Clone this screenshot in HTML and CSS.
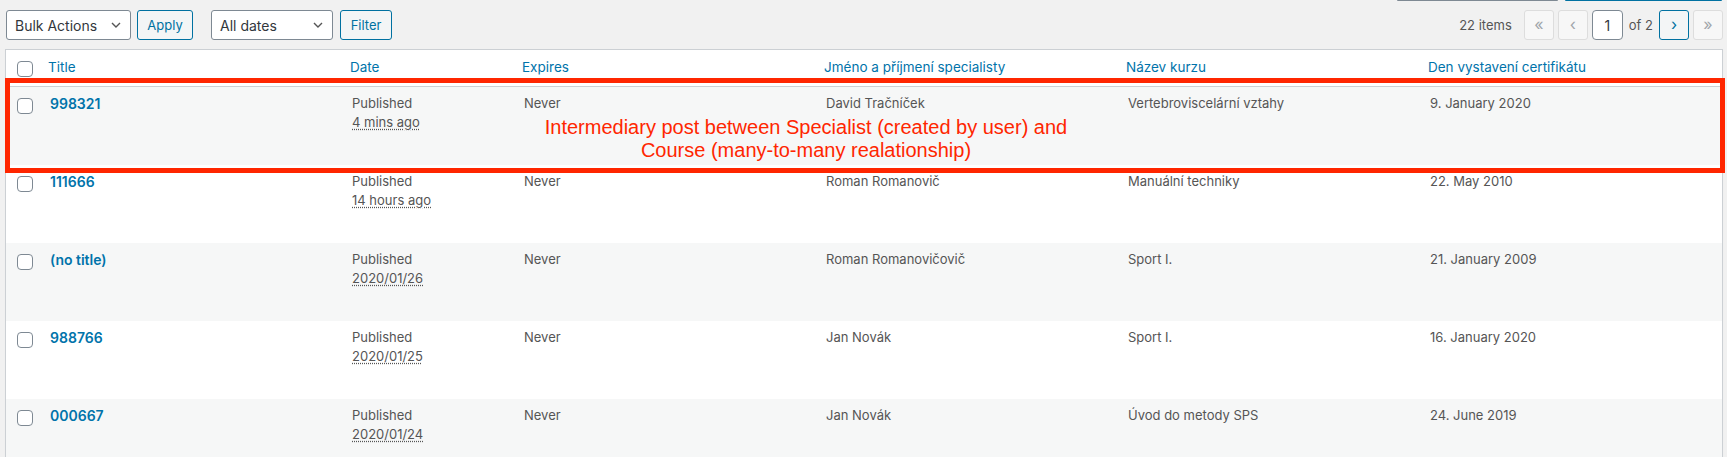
FILE: index.html
```html
<!DOCTYPE html>
<html lang="cs">
<head>
	<meta charset="UTF-8">
	<title>Certifikáty</title>
	<link rel="stylesheet" href="styles.css">
</head>
<body>
<div class="wrap">
	<div class="search-box"><span class="search-input"></span><span class="search-submit"></span></div>

	<div class="tablenav">
		<div class="actions">
			<div class="select bulk">Bulk Actions
				<svg width="10" height="6" viewBox="0 0 10 6"><polyline points="1,1 5,5 9,1" fill="none" stroke="#555" stroke-width="1.4"/></svg>
			</div>
			<span class="button apply">Apply</span>
		</div>
		<div class="actions">
			<div class="select dates">All dates
				<svg width="10" height="6" viewBox="0 0 10 6"><polyline points="1,1 5,5 9,1" fill="none" stroke="#555" stroke-width="1.4"/></svg>
			</div>
			<span class="button filter">Filter</span>
		</div>
		<div class="pages">
			<span class="displaying-num">22 items</span>
			<span class="navspan">«</span>
			<span class="navspan">‹</span>
			<span class="current-page">1</span>
			<span class="paging-text">of 2</span>
			<span class="button navbtn">›</span>
			<span class="navspan">»</span>
		</div>
	</div>

	<table class="list">
		<colgroup>
			<col class="col-cb">
			<col>
			<col class="col-date">
			<col>
			<col>
			<col>
			<col>
		</colgroup>
		<thead>
			<tr>
				<td class="check-column"><span class="cb"></span></td>
				<th><a>Title</a></th>
				<th><a>Date</a></th>
				<th><a>Expires</a></th>
				<th><a>Jméno a příjmení specialisty</a></th>
				<th><a>Název kurzu</a></th>
				<th><a>Den vystavení certifikátu</a></th>
			</tr>
		</thead>
		<tbody>
			<tr class="alt">
				<th class="check-column"><span class="cb"></span></th>
				<td><strong class="row-title">998321</strong></td>
				<td>Published<br><abbr>4 mins ago</abbr></td>
				<td>Never</td>
				<td>David Tračníček</td>
				<td>Vertebroviscelární vztahy</td>
				<td>9. January 2020</td>
			</tr>
			<tr>
				<th class="check-column"><span class="cb"></span></th>
				<td><strong class="row-title">111666</strong></td>
				<td>Published<br><abbr>14 hours ago</abbr></td>
				<td>Never</td>
				<td>Roman Romanovič</td>
				<td>Manuální techniky</td>
				<td>22. May 2010</td>
			</tr>
			<tr class="alt">
				<th class="check-column"><span class="cb"></span></th>
				<td><strong class="row-title">(no title)</strong></td>
				<td>Published<br><abbr>2020/01/26</abbr></td>
				<td>Never</td>
				<td>Roman Romanovičovič</td>
				<td>Sport I.</td>
				<td>21. January 2009</td>
			</tr>
			<tr>
				<th class="check-column"><span class="cb"></span></th>
				<td><strong class="row-title">988766</strong></td>
				<td>Published<br><abbr>2020/01/25</abbr></td>
				<td>Never</td>
				<td>Jan Novák</td>
				<td>Sport I.</td>
				<td>16. January 2020</td>
			</tr>
			<tr class="alt">
				<th class="check-column"><span class="cb"></span></th>
				<td><strong class="row-title">000667</strong></td>
				<td>Published<br><abbr>2020/01/24</abbr></td>
				<td>Never</td>
				<td>Jan Novák</td>
				<td>Úvod do metody SPS</td>
				<td>24. June 2019</td>
			</tr>
		</tbody>
	</table>
</div>

<!-- annotation drawn over the screenshot -->
<div class="note-box"></div>
<div class="note-text">Intermediary post between Specialist (created by user) and<br>Course (many-to-many realationship)</div>
</body>
</html>
```

FILE: styles.css
```css
:root {
	--color-page: #f1f1f1;
	--color-text: #555;
	--color-text-dark: #32373c;
	--color-link: #0073aa;
	--color-button: #0071a1;
	--color-border: #ccd0d4;
	--color-input-border: #7e8993;
	--color-stripe: #f6f7f7;
	--color-note: #ff2600;
}

html {
	font-family: Inter, "Noto Sans", sans-serif;
	font-size: 13px;
	color: var(--color-text);
	background: var(--color-page);
}

body {
	margin: 0;
}

.wrap {
	padding: 0 4px 0 5px;
}

/* bottom edge of the search box, cut off by the screenshot */

.search-box {
	display: flex;
	justify-content: flex-end;
	gap: 7px;
	height: 1px;
	padding-right: 1px;
}

.search-input {
	width: 161px;
	border-bottom: 1px solid var(--color-input-border);
	border-radius: 0 0 3px 3px;
}

.search-submit {
	width: 157px;
	border-bottom: 1px solid var(--color-button);
	border-radius: 0 0 3px 3px;
}

/* toolbar */

.tablenav {
	display: flex;
	align-items: center;
	height: 30px;
	margin: 9px 0 9px;
}

.actions {
	display: flex;
	gap: 6px;
	margin-right: 18px;
}

.actions:first-child {
	margin-left: 1px;
}

.select {
	box-sizing: border-box;
	display: flex;
	align-items: center;
	justify-content: space-between;
	height: 30px;
	padding: 0 9px 0 8px;
	border: 1px solid var(--color-input-border);
	border-radius: 3px;
	background: #fff;
	color: var(--color-text-dark);
	font-size: 14px;
}

.select.bulk {
	width: 125px;
}

.select.dates {
	width: 122px;
}

.button {
	box-sizing: border-box;
	display: flex;
	align-items: center;
	justify-content: center;
	height: 30px;
	padding: 0 10px;
	border: 1px solid var(--color-button);
	border-radius: 3px;
	background: #f3f5f6;
	color: var(--color-button);
}

.apply {
	width: 56px;
}

.filter {
	width: 52px;
	margin-left: 1px;
}

.pages {
	display: flex;
	align-items: center;
	margin-left: auto;
	gap: 4px;
}

.displaying-num {
	margin-right: 8px;
}

.navspan,
.navbtn {
	box-sizing: border-box;
	display: flex;
	align-items: center;
	justify-content: center;
	width: 30px;
	height: 30px;
	padding: 0 0 2px;
	border-radius: 3px;
	font-size: 16px;
}

.navspan {
	border: 1px solid #ddd;
	background: #f7f7f7;
	color: #a0a5aa;
}

.current-page {
	box-sizing: border-box;
	display: flex;
	align-items: center;
	justify-content: center;
	width: 31px;
	height: 30px;
	border: 1px solid var(--color-input-border);
	border-radius: 4px;
	background: #fff;
	color: var(--color-text-dark);
	font-size: 14px;
}

.paging-text {
	margin: 0 2px;
}

/* list table */

.list {
	width: 100%;
	table-layout: fixed;
	border-spacing: 0;
	border: 1px solid var(--color-border);
	background: #fff;
	box-shadow: 0 1px 1px rgba(0, 0, 0, .04);
}

.col-cb {
	width: 34px;
}

.col-date {
	width: 172px;
}

.list thead th,
.list thead td {
	border-bottom: 1px solid var(--color-border);
	padding: 8px;
	text-align: left;
	font-weight: 400;
	font-size: 13.5px;
	line-height: 19.6px;
	vertical-align: top;
}

.list thead a {
	color: var(--color-link);
}

.list tbody tr {
	height: 78px;
}

.list tbody tr.alt {
	background: var(--color-stripe);
}

.list tbody td {
	padding: 7px 10px 8px;
	line-height: 19.5px;
	vertical-align: top;
}

.list .check-column {
	padding: 11px 0 0 3px;
	vertical-align: top;
}

.cb {
	display: block;
	box-sizing: border-box;
	width: 16px;
	height: 16px;
	margin-left: 8px;
	border: 1px solid var(--color-input-border);
	border-radius: 4px;
	background: #fff;
}

.row-title {
	color: var(--color-link);
	font-size: 14px;
	font-weight: 600;
}

abbr {
	text-decoration: underline dotted;
	text-underline-offset: 2px;
}

/* annotation */

.note-box {
	position: absolute;
	left: 5px;
	top: 78px;
	box-sizing: border-box;
	width: 1720px;
	height: 95px;
	border: 5px solid var(--color-note);
}

.note-text {
	position: absolute;
	left: 406px;
	top: 116px;
	width: 800px;
	text-align: center;
	font-family: "Liberation Sans", Arial, sans-serif;
	font-size: 20px;
	line-height: 23px;
	color: var(--color-note);
}
```
